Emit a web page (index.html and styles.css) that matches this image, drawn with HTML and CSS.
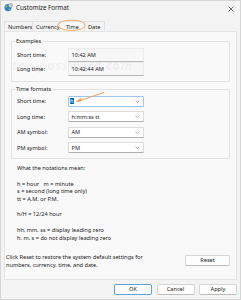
FILE: index.html
```html
<html>
<head>
<title>Customize Format</title>
<link rel="stylesheet" href="styles.css">
</head>
<body>
<div class="window">
  <div class="titlebar">
    <svg class="appicon" width="9" height="9" viewBox="0 0 9 9">
      <circle cx="4" cy="4.6" r="3.6" fill="#2f7fd0"/>
      <path d="M2 2.6 C3 2 4 2.6 3.6 3.6 C3 4.4 2.2 4.2 1.6 5 C1 4.2 1.2 3.2 2 2.6 Z" fill="#6cc04a"/>
      <path d="M4.6 5.4 C5.6 5 6.6 5.6 6.4 6.6 C5.8 7.6 4.8 7.4 4.4 6.6 Z" fill="#6cc04a"/>
      <circle cx="6.6" cy="2.4" r="2" fill="#e8e8e8" stroke="#777" stroke-width="0.5"/>
      <path d="M6.6 1.4 V2.4 H7.4" stroke="#333" stroke-width="0.4" fill="none"/>
    </svg>
    <span class="title">Customize Format</span>
    <svg class="close" width="6" height="6" viewBox="0 0 6 6">
      <path d="M0.5 0.5 L5.5 5.5 M5.5 0.5 L0.5 5.5" stroke="#333" stroke-width="0.7"/>
    </svg>
  </div>

  <div class="tabs">
    <div class="tab t-num">Numbers</div>
    <div class="tab t-cur">Currency</div>
    <div class="tab t-time active">Time</div>
    <div class="tab t-date">Date</div>
  </div>

  <div class="panel">
    <fieldset class="group examples">
      <legend>Examples</legend>
      <div class="row">
        <span class="label">Short time:</span>
        <span class="readonly">10:42 AM</span>
      </div>
      <div class="row">
        <span class="label">Long time:</span>
        <span class="readonly">10:42:44 AM</span>
      </div>
    </fieldset>

    <fieldset class="group formats">
      <legend>Time formats</legend>
      <div class="row">
        <span class="label">Short time:</span>
        <span class="combo focus"><span class="sel">h</span><svg class="chev" width="5" height="3" viewBox="0 0 5 3"><path d="M0.5 0.5 L2.5 2.5 L4.5 0.5" stroke="#666" stroke-width="0.5" fill="none"/></svg></span>
      </div>
      <div class="row">
        <span class="label">Long time:</span>
        <span class="combo"><span>h:mm:ss tt</span><svg class="chev" width="5" height="3" viewBox="0 0 5 3"><path d="M0.5 0.5 L2.5 2.5 L4.5 0.5" stroke="#666" stroke-width="0.5" fill="none"/></svg></span>
      </div>
      <div class="row spaced">
        <span class="label">AM symbol:</span>
        <span class="combo"><span>AM</span><svg class="chev" width="5" height="3" viewBox="0 0 5 3"><path d="M0.5 0.5 L2.5 2.5 L4.5 0.5" stroke="#666" stroke-width="0.5" fill="none"/></svg></span>
      </div>
      <div class="row">
        <span class="label">PM symbol:</span>
        <span class="combo"><span>PM</span><svg class="chev" width="5" height="3" viewBox="0 0 5 3"><path d="M0.5 0.5 L2.5 2.5 L4.5 0.5" stroke="#666" stroke-width="0.5" fill="none"/></svg></span>
      </div>
    </fieldset>

    <div class="notes">
      <div>What the notations mean:</div>
      <div>&nbsp;</div>
      <div>h = hour &nbsp; m = minute</div>
      <div>s = second (long time only)</div>
      <div>tt = A.M. or P.M.</div>
      <div>&nbsp;</div>
      <div>h/H = 12/24 hour</div>
      <div>&nbsp;</div>
      <div>hh, mm, ss = display leading zero</div>
      <div>h, m, s = do not display leading zero</div>
    </div>

    <div class="reset-row">
      <div class="reset-text">Click Reset to restore the system default settings for<br>numbers, currency, time, and date.</div>
      <div class="btn reset">Reset</div>
    </div>
  </div>

  <div class="buttons">
    <div class="btn ok">OK</div>
    <div class="btn">Cancel</div>
    <div class="btn">Apply</div>
  </div>

  <div class="watermark">top-password.com</div>

  <svg class="marks" width="241" height="300" viewBox="0 0 241 300">
    <ellipse cx="71.5" cy="25.3" rx="13.8" ry="5.2" fill="none" stroke="#f4a055" stroke-width="0.9"/>
    <path d="M104 92.5 L78 101.2" stroke="#f4a055" stroke-width="1" fill="none"/>
    <path d="M75.5 102 L80.8 97.8 L81.6 101.6 Z" fill="#f4a055"/>
  </svg>
</div>
</body>
</html>
```

FILE: styles.css
```css
body {
    margin: 0;
    background: #ffffff;
    font-family: "Noto Sans", "Liberation Sans", sans-serif;
    font-size: 5.6px;
    color: #1b1b1b;
}

.window {
    position: relative;
    width: 241px;
    height: 300px;
    box-sizing: border-box;
    border: 1px solid #d6d6d6;
    background: #f3f3f3;
    display: flex;
    flex-direction: column;
}

.titlebar {
    height: 19px;
    box-sizing: border-box;
    padding: 2px 0 0 3px;
    display: flex;
    align-items: flex-start;
}

.title {
    font-size: 6.2px;
    line-height: 11px;
    margin-left: 3px;
    margin-top: -1px;
    flex: 1;
}

.close {
    margin: 3px 6px 0 0;
}

.tabs {
    display: flex;
    height: 10px;
    margin-left: 3px;
    margin-top: 1px;
}

.tab {
    box-sizing: border-box;
    height: 10px;
    line-height: 10px;
    border: 1px solid #e2e2e2;
    border-bottom: none;
    margin-right: -1px;
    padding-left: 3px;
    color: #222;
}

.t-num { width: 29px; }
.t-cur { width: 28px; }
.t-time { width: 26px; padding-left: 6px; }
.t-date { width: 21px; padding-left: 3px; }

.tab.active {
    background: #f9f9f9;
    position: relative;
    z-index: 1;
}

.panel {
    margin: 0 3px;
    height: 249px;
    box-sizing: border-box;
    border: 1px solid #e5e5e5;
    background: #f9f9f9;
    padding: 6px 6px 0 6px;
    display: flex;
    flex-direction: column;
}

.group {
    margin: 0;
    border: 1px solid #e3e3e3;
    padding: 2px 5px 5px 5px;
}

.group legend {
    padding: 0 1px;
    margin-left: -2px;
    line-height: 7.6px;
}

.formats {
    margin-top: 4px;
    padding-top: 2.5px;
}

.row {
    display: flex;
    align-items: center;
}

.label {
    width: 50.5px;
}

.readonly {
    box-sizing: border-box;
    width: 76px;
    height: 14px;
    line-height: 13px;
    padding-left: 3px;
    background: #f7f7f7;
    border: 1px solid #ececec;
    border-bottom: 1px solid #b8b8b8;
}

.formats .row {
    margin-bottom: 4.5px;
}

.formats .row:last-child {
    margin-bottom: 0;
}

.formats .row.spaced {
    margin-top: 4.5px;
}

.combo {
    box-sizing: border-box;
    width: 76px;
    height: 11px;
    display: flex;
    align-items: center;
    justify-content: space-between;
    padding: 0 3px 0 3px;
    background: #ffffff;
    border: 1px solid #dcdcdc;
    border-bottom: 1px solid #b0b0b0;
    border-radius: 1px;
}

.combo.focus {
    border: 1px solid #9cc8ee;
    padding-left: 1px;
}

.sel {
    background: #0067c0;
    color: #ffffff;
    padding: 0 0.5px;
    line-height: 6px;
}

.notes {
    margin: 6px 0 0 6px;
    line-height: 7.7px;
}

.reset-row {
    display: flex;
    justify-content: space-between;
    align-items: flex-start;
    margin: 11px 0 0 -5px;
}

.reset-text {
    line-height: 8px;
}

.btn {
    box-sizing: border-box;
    width: 38px;
    height: 11px;
    line-height: 9px;
    text-align: center;
    background: #fdfdfd;
    border: 1px solid #d6d6d6;
    border-bottom-color: #bdbdbd;
    border-radius: 2px;
}

.btn.reset {
    width: 45px;
    margin-top: 1.5px;
}

.buttons {
    display: flex;
    justify-content: flex-end;
    gap: 4.5px;
    padding: 4px 3px 0 0;
}

.btn.ok {
    border: 1px solid #5b9fdc;
}

.watermark {
    position: absolute;
    left: 11px;
    top: 55px;
    font-size: 13px;
    font-weight: bold;
    font-style: italic;
    color: rgba(0, 0, 0, 0.05);
    letter-spacing: 0.5px;
}

.marks {
    position: absolute;
    left: -1px;
    top: -1px;
    z-index: 2;
    pointer-events: none;
}
```
